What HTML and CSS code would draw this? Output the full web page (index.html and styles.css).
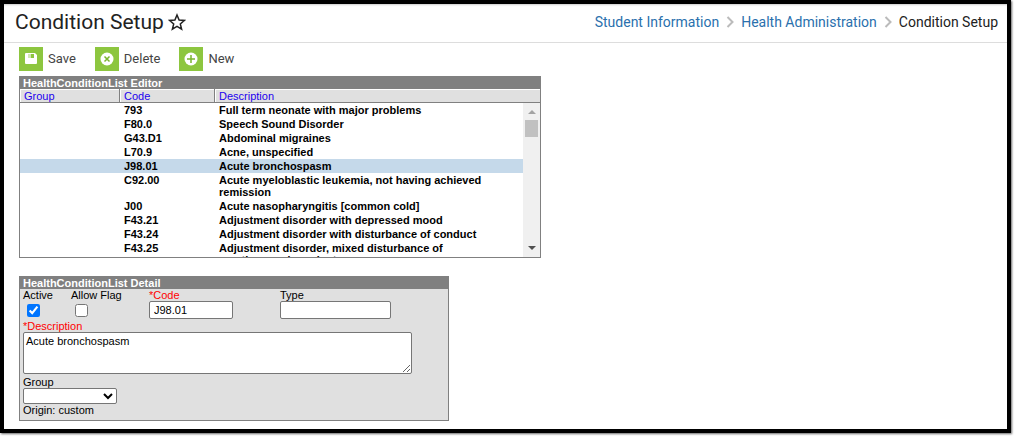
FILE: index.html
```html
<!DOCTYPE html>
<html lang="en">
<head>
<meta charset="utf-8">
<title>Condition Setup</title>
<link rel="stylesheet" href="styles.css">
</head>
<body>
<div class="frame">
  <header class="page-header">
    <h1 class="page-title">Condition Setup</h1>
    <button class="favorite" type="button" aria-label="Add to favorites">
      <svg viewBox="0 0 18 18" width="18" height="18" fill="none" stroke="#222" stroke-width="1.5" stroke-linejoin="miter"><path d="M9 2l2.1 5 5.3.4-4.1 3.5 1.3 5.2L9 13.3l-4.6 2.8 1.3-5.2L1.600 7.400 6.900 7z"/></svg>
    </button>
    <nav class="breadcrumbs" aria-label="Breadcrumb">
      <a href="#">Student Information</a>
      <svg class="chevron" viewBox="0 0 8 12" width="8" height="12"><path d="M1.500 1l5 5-5 5"/></svg>
      <a href="#">Health Administration</a>
      <svg class="chevron" viewBox="0 0 8 12" width="8" height="12"><path d="M1.500 1l5 5-5 5"/></svg>
      <span>Condition Setup</span>
    </nav>
  </header>

  <main class="content">
    <div class="toolbar">
      <button class="tool" type="button">
        <span class="tool-icon"><svg viewBox="0 0 24 24" width="24" height="24"><path fill="#fff" d="M7 6h9l2 2v8a1 1 0 0 1-1 1H7a1 1 0 0 1-1-1V7a1 1 0 0 1 1-1z"/><path fill="#8dc63f" d="M9 7h6v4H9z"/><path fill="#fff" opacity=".6" d="M9 7h3v4H9z"/></svg></span>
        <span>Save</span>
      </button>
      <button class="tool" type="button">
        <span class="tool-icon"><svg viewBox="0 0 24 24" width="24" height="24"><circle cx="12" cy="12" r="6.500" fill="#fff"/><path d="M9.500 9.500l5 5m0-5l-5 5" stroke="#7ab52c" stroke-width="1.500"/></svg></span>
        <span>Delete</span>
      </button>
      <button class="tool" type="button">
        <span class="tool-icon"><svg viewBox="0 0 24 24" width="24" height="24"><circle cx="12" cy="12" r="6.500" fill="#fff"/><path d="M12 8v8m-4-4h8" stroke="#7ab52c" stroke-width="1.500"/></svg></span>
        <span>New</span>
      </button>
    </div>

    <section class="panel editor">
      <h2 class="panel-title">HealthConditionList Editor</h2>
      <div class="list">
        <table class="conditions">
          <thead>
            <tr><th>Group</th><th>Code</th><th>Description</th></tr>
          </thead>
          <tbody>
            <tr><td></td><td>793</td><td>Full term neonate with major problems</td></tr>
            <tr><td></td><td>F80.0</td><td>Speech Sound Disorder</td></tr>
            <tr><td></td><td>G43.D1</td><td>Abdominal migraines</td></tr>
            <tr><td></td><td>L70.9</td><td>Acne, unspecified</td></tr>
            <tr class="selected"><td></td><td>J98.01</td><td>Acute bronchospasm</td></tr>
            <tr><td></td><td>C92.00</td><td>Acute myeloblastic leukemia, not having achieved remission</td></tr>
            <tr><td></td><td>J00</td><td>Acute nasopharyngitis [common cold]</td></tr>
            <tr><td></td><td>F43.21</td><td>Adjustment disorder with depressed mood</td></tr>
            <tr><td></td><td>F43.24</td><td>Adjustment disorder with disturbance of conduct</td></tr>
            <tr><td></td><td>F43.25</td><td>Adjustment disorder, mixed disturbance of emotions and conduct</td></tr>
          </tbody>
        </table>
        <div class="scrollbar" aria-hidden="true">
          <svg viewBox="0 0 8 4" width="8" height="4"><path d="M0 4l4-4 4 4z" fill="#a3a3a3"/></svg>
          <div class="track"><div class="thumb"></div></div>
          <svg viewBox="0 0 8 4" width="8" height="4"><path d="M0 0l4 4 4-4z" fill="#505050"/></svg>
        </div>
      </div>
    </section>

    <form class="panel detail">
      <h2 class="panel-title">HealthConditionList Detail</h2>
      <div class="fields">
        <div class="field-row">
          <div class="field"><label for="active">Active</label><input class="check" type="checkbox" id="active" checked></div>
          <div class="field"><label for="flag">Allow Flag</label><input class="check" type="checkbox" id="flag"></div>
          <div class="field"><label class="required" for="code">*Code</label><input class="text code" type="text" id="code" value="J98.01"></div>
          <div class="field"><label for="type">Type</label><input class="text type" type="text" id="type"></div>
        </div>
        <div class="field"><label class="required" for="description">*Description</label><textarea class="text description" id="description">Acute bronchospasm</textarea></div>
        <div class="field"><label for="group">Group</label><select class="group" id="group"><option></option></select></div>
        <div>Origin: custom</div>
      </div>
    </form>
  </main>
</div>
</body>
</html>
```

FILE: styles.css
```css
* {
  box-sizing: border-box;
}

body {
  margin: 0;
  background: #fff;
  color: #000;
  font: 11px/12px "Liberation Sans", Arial, sans-serif;
}

.frame {
  margin: 0 4px 4px 0;
  border: 4px solid #000;
  box-shadow: 1px 1px 2px rgba(0, 0, 0, 0.6);
}

.page-header {
  display: flex;
  align-items: center;
  height: 39px;
  padding: 0 9px 2px 11px;
  border-bottom: 1px solid #ddd;
  box-shadow: inset 0 2px 2px -1px #ccc;
  font-family: Roboto, sans-serif;
  color: #222;
}

.page-title {
  margin: 0;
  font-size: 21px;
  font-weight: 400;
  line-height: 24px;
}

.favorite {
  display: flex;
  margin: 0 0 0 4px;
  padding: 0;
  border: 0;
  background: none;
}

.breadcrumbs {
  display: flex;
  align-items: center;
  gap: 7px;
  margin-left: auto;
  font-size: 14px;
  line-height: 16px;
}

.breadcrumbs a {
  color: #2a70ad;
  text-decoration: none;
}

.chevron {
  fill: none;
  stroke: #bbb;
  stroke-width: 2;
}

.content {
  padding: 4px 15px 8px;
}

.toolbar {
  display: flex;
  gap: 19px;
  margin-bottom: 5px;
}

.tool {
  display: flex;
  align-items: center;
  gap: 5px;
  padding: 0;
  border: 0;
  background: none;
  color: #444;
  font: 13px/16px Roboto, sans-serif;
}

.tool-icon {
  display: flex;
  background: #8dc63f;
}

.panel {
  border: 1px solid #808080;
  border-top: 0;
}

.panel-title {
  margin: 0;
  height: 13px;
  padding: 1px 3px 0;
  background: #808080;
  color: #fff;
  font-size: 11px;
  line-height: 12px;
}

.editor {
  max-width: 522px;
  margin-bottom: 18px;
}

.list {
  display: grid;
  grid-template-columns: 1fr 17px;
}

.conditions {
  display: block;
  grid-area: 1 / 1 / 2 / 3;
}

.conditions thead,
.conditions tbody {
  display: block;
}

.conditions tr {
  display: grid;
  grid-template-columns: 100px 95px 1fr;
}

.conditions th {
  height: 14px;
  padding: 0 4px;
  border-right: 1px solid #808080;
  border-bottom: 1px solid #808080;
  background: #e0e0e0;
  box-shadow: inset 1px 1px #fff;
  color: #20e;
  font-weight: 400;
  line-height: 14px;
  text-align: left;
}

.conditions th:last-child {
  border-right: 0;
}

.conditions tbody {
  height: 154px;
  margin-right: 17px;
  overflow: hidden;
}

.conditions td {
  padding: 1px 4px;
  font-weight: 700;
}

.conditions td:last-child {
  padding-right: 36px;
}

.selected {
  background: #c5d9ea;
}

.scrollbar {
  grid-area: 1 / 2;
  display: flex;
  flex-direction: column;
  align-items: center;
  align-self: end;
  height: 154px;
  padding: 7px 0;
  background: #f0f0f0;
}

.track {
  flex: 1;
  padding-top: 6px;
}

.thumb {
  width: 13px;
  height: 17px;
  background: #c1c1c1;
}

.detail {
  max-width: 430px;
}

.fields {
  padding: 0 3px 4px;
  background: #e0e0e0;
}

.field {
  display: flex;
  flex-direction: column;
  align-items: flex-start;
}

.field-row {
  display: grid;
  grid-template-columns: 48px 78px 131px 1fr;
  margin-bottom: 1px;
}

.required {
  color: #f00;
}

.check {
  width: 13px;
  height: 13px;
  margin: 3px 4px 2px;
}

.text {
  border: 1px solid #767676;
  border-radius: 2px;
  background: #fff;
  color: #000;
  font: 11px/12px "Liberation Sans", Arial, sans-serif;
}

.code,
.type {
  width: 84px;
  height: 18px;
  padding: 0 4px;
}

.type {
  width: 111px;
}

.description {
  width: 100%;
  max-width: 389px;
  height: 42px;
  margin-bottom: 2px;
  padding: 2px;
}

.group {
  width: 94px;
  height: 16px;
  border: 1px solid #767676;
  border-radius: 2px;
  background: #fff;
  font: 11px/12px "Liberation Sans", Arial, sans-serif;
}
```
